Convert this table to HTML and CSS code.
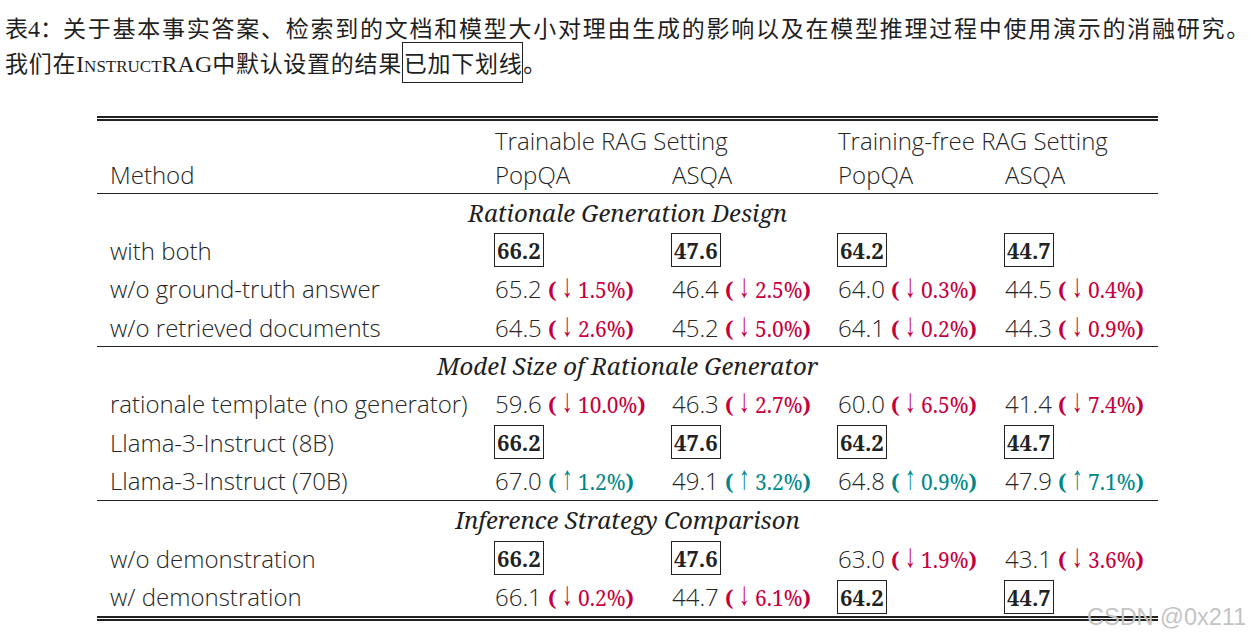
FILE: index.html
```html
<!DOCTYPE html>
<html lang="zh">
<head>
<meta charset="utf-8">
<title>表4</title>
<link rel="stylesheet" href="styles.css">
</head>
<body>
<div class="page">
  <div class="caption">
    <p class="cap-line l1"><span class="cap-label">表<span class="serif">4</span>：</span>关于基本事实答案、检索到的文档和模型大小对理由生成的影响以及在模型推理过程中使用演示的消融研究。</p>
    <p class="cap-line l2">我们在<span class="serif">I<span class="sc">nstruct</span>RAG</span>中默认设置的结果<span class="cap-box">已加下划线</span>。</p>
  </div>

  <table class="tbl">
    <colgroup>
      <col class="c-method"><col class="c-a"><col class="c-b"><col class="c-c"><col class="c-d">
    </colgroup>
    <thead>
      <tr class="hrow top">
        <td></td>
        <td colspan="2">Trainable RAG Setting</td>
        <td colspan="2">Training-free RAG Setting</td>
      </tr>
      <tr class="hrow bottom">
        <td class="m">Method</td>
        <td>PopQA</td><td>ASQA</td><td>PopQA</td><td>ASQA</td>
      </tr>
    </thead>
    <tbody>
      <tr class="sec"><td colspan="5">Rationale Generation Design</td></tr>
      <tr class="row">
        <td class="m">with both</td>
        <td><span class="best">66.2</span></td>
        <td><span class="best">47.6</span></td>
        <td><span class="best">64.2</span></td>
        <td><span class="best">44.7</span></td>
      </tr>
      <tr class="row">
        <td class="m">w/o ground-truth answer</td>
        <td>65.2 <span class="dn"><b>(</b> <span class="arr">↓</span> 1.5%<b>)</b></span></td>
        <td>46.4 <span class="dn"><b>(</b> <span class="arr">↓</span> 2.5%<b>)</b></span></td>
        <td>64.0 <span class="dn"><b>(</b> <span class="arr">↓</span> 0.3%<b>)</b></span></td>
        <td>44.5 <span class="dn"><b>(</b> <span class="arr">↓</span> 0.4%<b>)</b></span></td>
      </tr>
      <tr class="row last">
        <td class="m">w/o retrieved documents</td>
        <td>64.5 <span class="dn"><b>(</b> <span class="arr">↓</span> 2.6%<b>)</b></span></td>
        <td>45.2 <span class="dn"><b>(</b> <span class="arr">↓</span> 5.0%<b>)</b></span></td>
        <td>64.1 <span class="dn"><b>(</b> <span class="arr">↓</span> 0.2%<b>)</b></span></td>
        <td>44.3 <span class="dn"><b>(</b> <span class="arr">↓</span> 0.9%<b>)</b></span></td>
      </tr>

      <tr class="sec"><td colspan="5">Model Size of Rationale Generator</td></tr>
      <tr class="row">
        <td class="m">rationale template (no generator)</td>
        <td>59.6 <span class="dn"><b>(</b> <span class="arr">↓</span> 10.0%<b>)</b></span></td>
        <td>46.3 <span class="dn"><b>(</b> <span class="arr">↓</span> 2.7%<b>)</b></span></td>
        <td>60.0 <span class="dn"><b>(</b> <span class="arr">↓</span> 6.5%<b>)</b></span></td>
        <td>41.4 <span class="dn"><b>(</b> <span class="arr">↓</span> 7.4%<b>)</b></span></td>
      </tr>
      <tr class="row">
        <td class="m">Llama-3-Instruct (8B)</td>
        <td><span class="best">66.2</span></td>
        <td><span class="best">47.6</span></td>
        <td><span class="best">64.2</span></td>
        <td><span class="best">44.7</span></td>
      </tr>
      <tr class="row last">
        <td class="m">Llama-3-Instruct (70B)</td>
        <td>67.0 <span class="up"><b>(</b> <span class="arr">↑</span> 1.2%<b>)</b></span></td>
        <td>49.1 <span class="up"><b>(</b> <span class="arr">↑</span> 3.2%<b>)</b></span></td>
        <td>64.8 <span class="up"><b>(</b> <span class="arr">↑</span> 0.9%<b>)</b></span></td>
        <td>47.9 <span class="up"><b>(</b> <span class="arr">↑</span> 7.1%<b>)</b></span></td>
      </tr>

      <tr class="sec"><td colspan="5">Inference Strategy Comparison</td></tr>
      <tr class="row tall">
        <td class="m">w/o demonstration</td>
        <td><span class="best">66.2</span></td>
        <td><span class="best">47.6</span></td>
        <td>63.0 <span class="dn"><b>(</b> <span class="arr">↓</span> 1.9%<b>)</b></span></td>
        <td>43.1 <span class="dn"><b>(</b> <span class="arr">↓</span> 3.6%<b>)</b></span></td>
      </tr>
      <tr class="row tall end">
        <td class="m">w/ demonstration</td>
        <td>66.1 <span class="dn"><b>(</b> <span class="arr">↓</span> 0.2%<b>)</b></span></td>
        <td>44.7 <span class="dn"><b>(</b> <span class="arr">↓</span> 6.1%<b>)</b></span></td>
        <td><span class="best">64.2</span></td>
        <td><span class="best">44.7</span></td>
      </tr>
    </tbody>
  </table>

  <div class="watermark">CSDN @0x211</div>
</div>
</body>
</html>
```

FILE: styles.css
```css
html, body {
  margin: 0;
  padding: 0;
  background: #ffffff;
}

.page {
  position: relative;
  width: 1251px;
  height: 640px;
  overflow: hidden;
}

.caption {
  padding: 10px 0 0 5px;
  font-family: "Noto Sans CJK SC", "Liberation Serif", serif;
  font-size: 23px;
  color: #1f1f1f;
}

.cap-line {
  margin: 0;
  height: 35px;
  line-height: 35px;
  white-space: nowrap;
}

.cap-line.l1 {
  letter-spacing: 1.75px;
}

.cap-line.l2 {
  letter-spacing: 0.7px;
}

.cap-label {
  letter-spacing: 0;
}

.serif {
  font-family: "Liberation Serif", serif;
  font-size: 24px;
  letter-spacing: 0;
}

.sc {
  font-variant: small-caps;
}

.cap-box {
  border: 1px solid #222;
  padding: 2px 0 3px 1px;
}

.tbl {
  margin: 36px 0 0 97px;
  width: 1061px;
  table-layout: fixed;
  border-collapse: collapse;
  font-family: "Open Sans", "Noto Sans", sans-serif;
  font-weight: 300;
  font-size: 24px;
  color: #262626;
}

.c-method { width: 398px; }
.c-a { width: 177px; }
.c-b { width: 166px; }
.c-c { width: 167px; }
.c-d { width: 153px; }

.tbl td {
  padding: 0;
  white-space: nowrap;
  vertical-align: middle;
}

.tbl td.m {
  padding-left: 13px;
}

.hrow {
  height: 36px;
}

.hrow.top td {
  border-top: 5px double #222;
  padding-top: 3px;
}

.hrow.bottom td {
  border-bottom: 1.5px solid #222;
}

.sec {
  height: 38px;
}

.sec td {
  text-align: center;
  font-family: "Noto Serif", "Liberation Serif", serif;
  font-style: italic;
  font-weight: 400;
  font-size: 24px;
  color: #1f1f1f;
}

.row {
  height: 38.5px;
}

.row.tall {
  height: 40px;
}

.row.last td {
  border-bottom: 1.5px solid #222;
}

.row.end td {
  border-bottom: 5px double #222;
}

.best {
  display: inline-block;
  margin-left: -1px;
  padding: 0 2px;
  border: 1px solid #222;
  line-height: 32px;
  font-family: "Noto Serif", "Liberation Serif", serif;
  font-weight: 700;
  font-size: 22px;
  color: #222;
}

.dn, .up {
  font-family: "Noto Serif", "Liberation Serif", serif;
  font-weight: 400;
  font-size: 21px;
}

.dn b, .up b {
  font-weight: 700;
}

.arr {
  display: inline-block;
  line-height: 12px;
  transform: scale(1.05, 1.6);
  transform-origin: 50% 16px;
}

.dn { color: #c5003e; }
.up { color: #00878a; }

.watermark {
  position: absolute;
  left: 1087px;
  top: 606px;
  font-family: "Liberation Sans", Arial, sans-serif;
  font-size: 23.5px;
  line-height: 1;
  color: #c4c4c4;
  white-space: nowrap;
}
```
